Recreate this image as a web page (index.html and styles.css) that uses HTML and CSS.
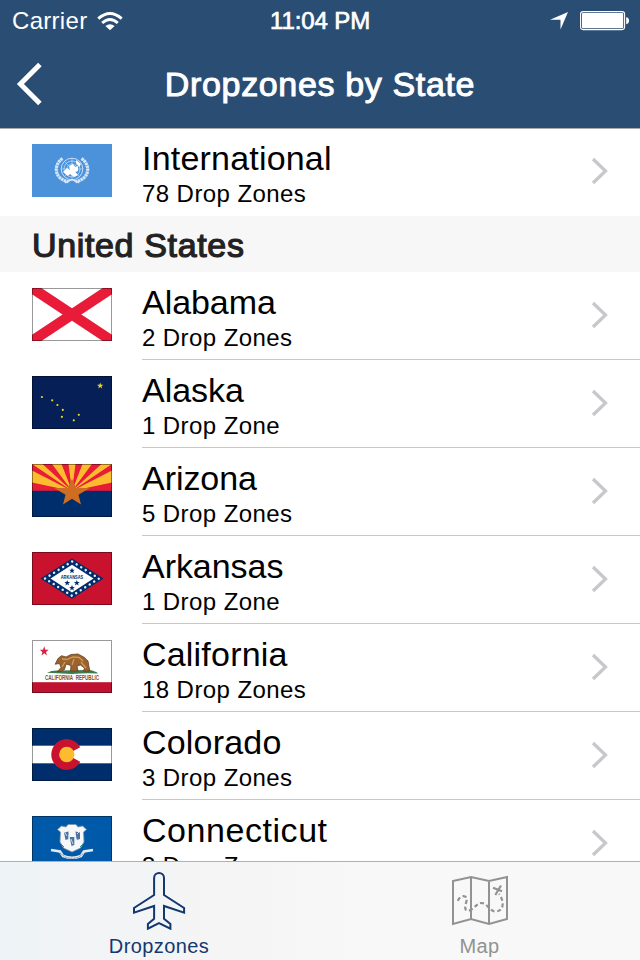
FILE: index.html
```html
<!DOCTYPE html>
<html lang="en">
<head>
<meta charset="utf-8">
<title>Dropzones by State</title>
<link rel="stylesheet" href="styles.css">
</head>
<body>
<div class="app">
  <header class="header">
    <div class="status">
      <div class="status-left"><span class="carrier">Carrier</span>
        <svg class="wifi" width="26" height="20" viewBox="0 0 26 20"><g fill="none" stroke="#fff" stroke-width="3"><path d="M1.3 7.6Q13 -2.6 24.7 7.6"/><path d="M5.2 12Q13 5.1 20.8 12"/></g><path d="M8.4 15Q13 11.5 17.6 15L13 19.3Z" fill="#fff"/></svg>
      </div>
      <span class="time">11:04 PM</span>
      <div class="status-right">
        <svg width="18" height="18" viewBox="0 0 18 18"><path d="M18 0L10.5 17.5V7.8H0Z" fill="#fff"/></svg>
        <svg width="50" height="20" viewBox="0 0 50 20"><rect x=".6" y=".6" width="44" height="18" rx="2.5" fill="none" stroke="#fff" stroke-width="1.1"/><rect x="2" y="2" width="41.2" height="15.2" rx="1" fill="#fff"/><path d="M46.2 6.3C50 6.3 50 13.2 46.2 13.2Z" fill="#fff"/></svg>
      </div>
    </div>
    <div class="nav">
      <svg class="back" width="28" height="44" viewBox="0 0 28 44"><path d="M25.9 2.6L6.4 22L25.9 41.4" fill="none" stroke="#fff" stroke-width="5"/></svg>
      <h1 class="title">Dropzones by State</h1>
    </div>
  </header>

  <main class="list">
    <div class="row last">
      <svg class="flag" viewBox="0 0 80 53"><rect width="80" height="53" fill="#4b92db"/>
        <g fill="none" stroke="#d5e6f8"><circle cx="40" cy="25" r="10.8" stroke-width=".9"/><circle cx="40" cy="25" r="8" stroke-width=".65"/><circle cx="40" cy="25" r="5" stroke-width=".6"/><path d="M29 25H51M40 14V36M32.3 17.3L47.7 32.7M47.7 17.3L32.3 32.7" stroke-width=".55"/><path d="M30.5 14.5C21 21 22 35 36.5 37.7M49.5 14.5C59 21 58 35 43.5 37.7" stroke-width="3.2" stroke-dasharray="2.5 .5"/><path d="M33 38.7L40 35.5L47 38.7" stroke-width="1.5"/></g>
        <path d="M31 28L35 24L38 26L37 22L41 20L43 23L46 22V27L43 28L46 31L42 33L38 30L36 32ZM44 16L49 20L47 23L44 19Z" fill="#fff"/></svg>
      <div class="cell"><div class="text"><div class="name">International</div><div class="count">78 Drop Zones</div></div><svg class="chev" viewBox="0 0 18 28"><path d="M2 2L14.5 14L2 26"/></svg></div>
    </div>
    <h2 class="section">United States</h2>
    <div class="row">
      <svg class="flag" viewBox="0 0 80 53"><rect width="80" height="53" fill="#fff"/><path d="M0 0L80 53M80 0L0 53" stroke="#e81c38" stroke-width="10.4"/><rect class="edge" x=".5" y=".5" width="79" height="52"/></svg>
      <div class="cell"><div class="text"><div class="name snug">Alabama</div><div class="count">2 Drop Zones</div></div><svg class="chev" viewBox="0 0 18 28"><path d="M2 2L14.5 14L2 26"/></svg></div>
    </div>
    <div class="row">
      <svg class="flag" viewBox="0 0 80 53"><rect width="80" height="53" fill="#061f57"/><g fill="#e5d927"><path d="M68.2 6.5L69 8.8H71.3L69.5 10.2L70.2 12.5L68.2 11.1L66.2 12.5L66.9 10.2L65.1 8.8H67.4Z"/><circle cx="9.9" cy="21" r="1.1"/><circle cx="20.2" cy="24.3" r="1.1"/><circle cx="25.4" cy="29" r="1.1"/><circle cx="30.8" cy="33.9" r="1.1"/><circle cx="29.9" cy="40.8" r="1.1"/><circle cx="41.8" cy="44.3" r="1.1"/><circle cx="46.8" cy="38.8" r="1.1"/></g><rect class="edge" x=".5" y=".5" width="79" height="52"/></svg>
      <div class="cell"><div class="text"><div class="name snug">Alaska</div><div class="count">1 Drop Zone</div></div><svg class="chev" viewBox="0 0 18 28"><path d="M2 2L14.5 14L2 26"/></svg></div>
    </div>
    <div class="row">
      <svg class="flag" viewBox="0 0 80 53"><rect width="80" height="53" fill="#e81c38"/><path fill="#fdbb30" d="M40 27L0 18.5V6.5ZM40 27L0 0H10.5ZM40 27L20 0H29.5ZM40 27L36.5 0H43.5ZM40 27L50.5 0H60ZM40 27L69.5 0H80ZM40 27L80 6.5V18.5Z"/><rect y="26.8" width="80" height="26.2" fill="#002d6b"/><path d="M40 14.5L44.2 23.8L57.5 24.2L46.5 30.8L49 40.5L40 34.7L31 40.5L33.5 30.8L22.5 24.2L35.8 23.8Z" fill="#cf6d20"/><rect class="edge" x=".5" y=".5" width="79" height="52"/></svg>
      <div class="cell"><div class="text"><div class="name snug">Arizona</div><div class="count">5 Drop Zones</div></div><svg class="chev" viewBox="0 0 18 28"><path d="M2 2L14.5 14L2 26"/></svg></div>
    </div>
    <div class="row">
      <svg class="flag" viewBox="0 0 80 53"><rect width="80" height="53" fill="#c8122e"/><path d="M8.5 26.5L40 6.5L71.5 26.5L40 46.8Z" fill="#002d6b"/><path d="M18.5 26.5L40 12.7L61.5 26.5L40 40.5Z" fill="#fff"/><path d="M13 26.5L40 9.4L67 26.5L40 43.8Z" fill="none" stroke="#e7edf5" stroke-width="2.4" stroke-linecap="round" stroke-dasharray=".1 5.25"/><g fill="#002d6b"><path id="s" d="M40 15.8L40.8 17.7H42.9L41.2 19.1L41.9 21.3L40 20L38.1 21.3L38.8 19.1L37.1 17.7H39.2Z"/><use href="#s" x="-4.8" y="12.3"/><use href="#s" x="4.8" y="12.3"/><use href="#s" y="17.2"/></g><text x="40" y="27.4" text-anchor="middle" textLength="22.5" lengthAdjust="spacingAndGlyphs" class="ark">ARKANSAS</text><rect class="edge" x=".5" y=".5" width="79" height="52"/></svg>
      <div class="cell"><div class="text"><div class="name snug">Arkansas</div><div class="count">1 Drop Zone</div></div><svg class="chev" viewBox="0 0 18 28"><path d="M2 2L14.5 14L2 26"/></svg></div>
    </div>
    <div class="row">
      <svg class="flag" viewBox="0 0 80 53"><rect width="80" height="53" fill="#fff"/><rect y="42.2" width="80" height="10.8" fill="#bf1230"/><path d="M12.2 6.3L13.3 9.8H16.6L14 12L15 15.4L12.2 13.3L9.4 15.4L10.4 12L7.8 9.8H11.1Z" fill="#d22340"/><path d="M15 32.8Q20 30 27 30.5L57 30Q64 31 66 33.5Q52 33 40 34Z" fill="#3d7a4c"/><path d="M23.2 24.2L26 18.5L29.5 15.7L34 17L39 14.5L46 14L52 17.2L56 21L57 27L58 31H51.5L52.5 28L48.5 25L45 26L46 31H38.5L39 25.5L34 24L32.5 29.5L29 31.5H25.5L29 27.5L27.5 23.5Z" fill="#9b6330" stroke="#65401f" stroke-width=".8"/><path d="M30 19L35 19.5L41 17L47 17.5L51 21M42 19L40 25M49 22L54 28M33 22L30 27" fill="none" stroke="#d39b51" stroke-width="1.3"/><text x="40" y="39.7" text-anchor="middle" textLength="54" lengthAdjust="spacingAndGlyphs" class="cal">CALIFORNIA&#160; REPUBLIC</text><rect class="edge" x=".5" y=".5" width="79" height="52"/></svg>
      <div class="cell"><div class="text"><div class="name">California</div><div class="count">18 Drop Zones</div></div><svg class="chev" viewBox="0 0 18 28"><path d="M2 2L14.5 14L2 26"/></svg></div>
    </div>
    <div class="row">
      <svg class="flag" viewBox="0 0 80 53"><rect width="80" height="53" fill="#002d6b"/><rect y="17.7" width="80" height="17.6" fill="#fff"/><path d="M35 26.5L48.2 19.2A15.4 15.4 0 1 0 48.2 33.8Z" fill="#c8122e"/><path d="M35 26.5L49 19.5V33.5Z" fill="#fff"/><circle cx="34.8" cy="26.5" r="7.7" fill="#fdbb30"/><rect class="edge" x=".5" y=".5" width="79" height="52"/></svg>
      <div class="cell"><div class="text"><div class="name">Colorado</div><div class="count">3 Drop Zones</div></div><svg class="chev" viewBox="0 0 18 28"><path d="M2 2L14.5 14L2 26"/></svg></div>
    </div>
    <div class="row">
      <svg class="flag" viewBox="0 0 80 53"><rect width="80" height="53" fill="#0059a9"/><path d="M29.5 10L34 11L36 8.5H44L46 11L50.5 10L54.5 13.5L51.5 16L52 26L48.5 32L40 36L31.5 32L28 26L28.5 16L25.5 13.5Z" fill="#f5f7f8" stroke="#8195a6" stroke-width=".8"/><g fill="#4a75a0"><path d="M32 16.5L36.5 15.5V23L33.5 24ZM43.5 15.5L48 16.5V23L44.5 24ZM37.7 21H42.3V29L39.5 30Z"/></g><path d="M32 15L35 20M37 19V25M43 20L45 25M48 15L45 18M39 23L41 28" stroke="#e9f0f2" stroke-width=".8"/><path d="M29 28L32 31M51 28L48 31" stroke="#39957d"/><path d="M19 34L28 35.5L31 40Q40 43.5 49 40L52 35.5L61 34" fill="none" stroke="#e6e9ed" stroke-width="2.7"/><path d="M28 37L33 41Q40 43.5 47 41L52 37" fill="none" stroke="#6e879e" stroke-width=".9" stroke-dasharray="2 1"/><rect class="edge" x=".5" y=".5" width="79" height="52"/></svg>
      <div class="cell"><div class="text"><div class="name wide">Connecticut</div><div class="count">3 Drop Zones</div></div><svg class="chev" viewBox="0 0 18 28"><path d="M2 2L14.5 14L2 26"/></svg></div>
    </div>
  </main>

  <nav class="tabs">
    <div class="tab active">
      <svg width="56" height="60" viewBox="0 0 56 60"><path d="M23.1 8C23.1 1.3 33 1.3 33 8V25L53.1 38V42.6L33 36V48.8L39.4 54V58.7L28 53L16.9 58.7V54L23.1 48.8V36L3 42.6V38L23.1 25Z" fill="none" stroke="#12386f" stroke-width="2"/></svg>
      <span>Dropzones</span>
    </div>
    <div class="tab">
      <svg width="60" height="60" viewBox="0 0 60 60"><g fill="none" stroke="#929292" stroke-width="2"><path d="M3 11L21 7L39 11L57 7V49L39 54L21 49L3 54ZM21 7V49M39 11V54"/><path d="M7.8 30.8C11 23.5 18.5 26 16.5 31C15 37 13.5 41 20 40.3C26 37 28 32 32.5 33.2C38 34 40 42.3 46.5 41.3C54.5 41 54 30 49 24" stroke-width="2.2" stroke-dasharray="4 2.6"/><path d="M43 17.8L52 21.2M51 15.5L45.3 25" stroke-width="2.2"/></g></svg>
      <span>Map</span>
    </div>
  </nav>
</div>
</body>
</html>
```
FILE: styles.css
```css
* { box-sizing: border-box; }
body { margin: 0; font-family: "Liberation Sans", Arial, sans-serif; color: #000; background: #fff; }
svg { display: block; flex: none; }
.app { width: 640px; height: 960px; display: flex; flex-direction: column; overflow: hidden; }
.header { height: 129px; margin-bottom: -1px; position: relative; z-index: 1; flex: none; background: #2a4d73; border-bottom: 1px solid #a9a9a9; color: #fff; }
.status { height: 40px; display: grid; grid-template-columns: 1fr auto 1fr; align-items: center; padding: 0 10px 0 12px; font-size: 24px; line-height: 40px; }
.status-left { display: flex; align-items: center; gap: 11px; }
.carrier { letter-spacing: .3px; padding-top: 1px; }
.status-left .wifi { margin-left: -1px; }
.time { margin-left: -2px; letter-spacing: -.1px; -webkit-text-stroke: .7px #fff; padding-top: 1px; }
.status-right { display: flex; justify-content: flex-end; align-items: center; gap: 12px; }
.nav { height: 88px; display: grid; grid-template-columns: 44px 1fr 44px; align-items: center; padding: 0 14px; }
.title { margin: 0; text-align: center; font-size: 34px; line-height: 40px; font-weight: 400; letter-spacing: .65px; -webkit-text-stroke: 1px #fff; white-space: nowrap; }
.list { flex: 1; min-height: 0; overflow: hidden; }
.row { height: 88px; display: flex; padding-left: 32px; gap: 30px; }
.flag { width: 80px; height: 53px; margin-top: 16px; }
.edge { fill: none; stroke: #000; stroke-opacity: .4; }
.cell { flex: 1; display: flex; justify-content: space-between; border-bottom: 1px solid #c8c7cc; padding-right: 31px; }
.last .cell { border-bottom: 0; }
.text { padding-top: 10px; white-space: nowrap; }
.name { font-size: 34px; line-height: 40px; letter-spacing: .2px; }
.snug { letter-spacing: -.05px; }
.wide { letter-spacing: .55px; }
.count { margin-top: 2px; font-size: 24px; line-height: 28px; letter-spacing: .42px; }
.chev { width: 18px; height: 28px; margin-top: 29px; }
.chev path { fill: none; stroke: #c7c7cc; stroke-width: 3.3; }
.section { height: 56px; margin: 0; padding: 9px 32px 0; background: #f7f7f7; color: #222; font-size: 34px; line-height: 40px; font-weight: 400; letter-spacing: .65px; -webkit-text-stroke: 1.2px #222; }
.ark { font-size: 5.6px; font-weight: 700; fill: #002d6b; }
.cal { font-size: 6.4px; font-weight: 700; fill: #82502c; }
.tabs { height: 99px; flex: none; display: flex; border-top: 1px solid #b0b0b0; background: linear-gradient(90deg, #edf3f7 0, #f3f4f5 120px, #f5f5f5 260px, #f8f8f8 360px); }
.tab { flex: 1; display: flex; flex-direction: column; align-items: center; padding-top: 8px; color: #929292; font-size: 20px; line-height: 24px; letter-spacing: .4px; }
.tab span { margin-top: 4px; margin-right: 1px; }
.active svg { margin-right: 2px; }
.active span { margin-right: 2px; }
.active { color: #12386f; }
```
